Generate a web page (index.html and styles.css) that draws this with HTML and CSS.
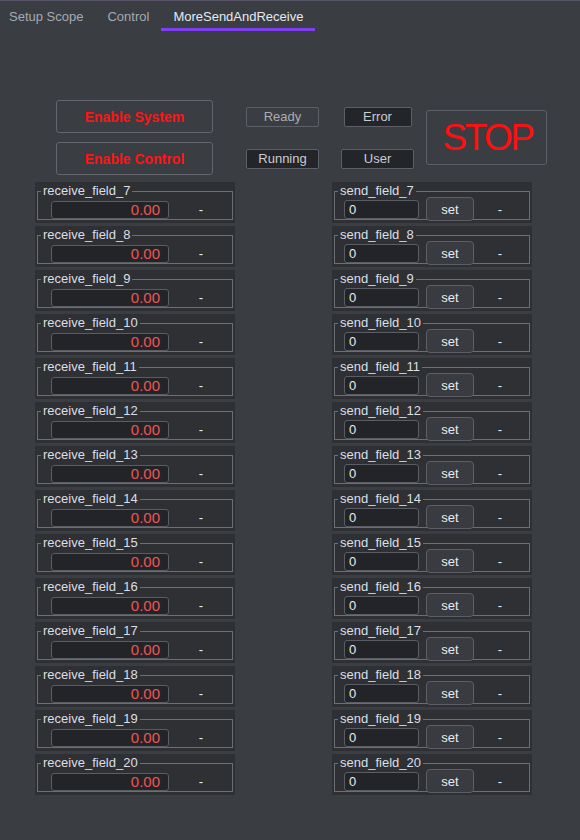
FILE: index.html
```html
<!DOCTYPE html>
<html>
<head>
  <meta charset="utf-8">
  <title>MoreSendAndReceive</title>
  <link rel="stylesheet" href="styles.css">
</head>
<body>

  <nav class="tabbar">
    <span class="tab">Setup Scope</span>
    <span class="tab">Control</span>
    <span class="tab active">MoreSendAndReceive</span>
  </nav>

  <section class="controls">
    <div class="enable-col">
      <button class="enable-btn">Enable System</button>
      <button class="enable-btn">Enable Control</button>
    </div>
    <div class="status-col">
      <span class="status">Ready</span>
      <span class="status on">Running</span>
    </div>
    <div class="status-col right">
      <span class="status on narrow">Error</span>
      <span class="status on">User</span>
    </div>
    <button class="stop-btn">STOP</button>
  </section>

  <section class="fields">
    <div class="column" id="receive-col"></div>
    <div class="column" id="send-col"></div>
  </section>

  <script>
    const receiveCol = document.getElementById('receive-col');
    const sendCol = document.getElementById('send-col');

    for (let i = 7; i <= 20; i++) {
      receiveCol.insertAdjacentHTML('beforeend',
        '<div class="panel">' +
          '<div class="group">' +
            '<span class="group-title">receive_field_' + i + '</span>' +
            '<span class="value-box">0.00</span>' +
            '<span class="dash">-</span>' +
          '</div>' +
        '</div>');

      sendCol.insertAdjacentHTML('beforeend',
        '<div class="panel">' +
          '<div class="group">' +
            '<span class="group-title">send_field_' + i + '</span>' +
            '<input class="send-input" type="text" value="0">' +
            '<button class="set-btn">set</button>' +
            '<span class="dash">-</span>' +
          '</div>' +
        '</div>');
    }
  </script>

</body>
</html>
```

FILE: styles.css
```css
body{
    margin: 0;
    background: #3a3d42;
    color: #dcdfe4;
    font-family: "Liberation Sans", Arial, sans-serif;
    font-size: 13px;
}

/* tabs */
.tabbar{
    display: flex;
    border-top: 1px solid #57546a;
    height: 30px;
}

.tab{
    padding: 5px 12px 0 12px;
    line-height: 22px;
    color: #a3abb5;
    box-sizing: border-box;
    height: 30px;
}

.tab:first-child{
    margin-left: -3px;
}

.tab.active{
    color: #e4eaf2;
    border-bottom: 3px solid #7f3ff0;
}

/* top controls */
.controls{
    display: flex;
    align-items: flex-start;
    padding: 69px 0 0 56px;
    height: 82px;
}

.enable-col{
    display: flex;
    flex-direction: column;
    gap: 9px;
    width: 157px;
}

.enable-btn{
    font: inherit;
    font-size: 14px;
    font-weight: bold;
    color: #ff1414;
    background: #3a3d42;
    border: 1px solid #62656b;
    border-radius: 3px;
    height: 33px;
    padding: 0;
}

.status-col{
    display: flex;
    flex-direction: column;
    align-items: center;
    gap: 22px;
    width: 73px;
    margin: 7px 0 0 33px;
}

.status-col.right{
    margin-left: 22px;
}

.status{
    box-sizing: border-box;
    width: 73px;
    height: 20px;
    line-height: 18px;
    text-align: center;
    color: #a9adb3;
    border: 1px solid #5c5f65;
    border-radius: 2px;
}

.status.on{
    background: #242529;
    color: #c9ccd1;
}

.status.narrow{
    width: 68px;
}

.stop-btn{
    margin: 10px 0 0 12px;
    width: 121px;
    height: 55px;
    background: #3a3d42;
    border: 1px solid #5c5f65;
    border-radius: 3px;
    color: #ff1010;
    font-family: "Liberation Sans", Arial, sans-serif;
    font-size: 37px;
    letter-spacing: -2.5px;
    padding: 0 0 0 2px;
}

/* field panels */
.fields{
    display: flex;
    gap: 97px;
    padding: 0 0 0 35px;
}

.column{
    width: 200px;
}

.panel{
    background: #2e3034;
    height: 41px;
    margin-bottom: 3px;
    padding: 9px 2px 0 2px;
    box-sizing: border-box;
}

.group{
    position: relative;
    display: flex;
    align-items: flex-start;
    height: 29px;
    box-sizing: border-box;
    border: 1px solid #6b6e74;
    padding: 9px 0 0 13px;
}

.group-title{
    position: absolute;
    top: -9px;
    left: 3px;
    padding: 0 2px;
    background: #2e3034;
    color: #dcdfe4;
    line-height: 15px;
}

.value-box{
    box-sizing: border-box;
    width: 118px;
    height: 18px;
    background: #232428;
    border: 1px solid #5a5d63;
    border-radius: 3px;
    color: #f05454;
    font-size: 15px;
    line-height: 16px;
    text-align: right;
    padding-right: 8px;
}

.dash{
    margin: 1px 0 0 29px;
    width: 6px;
    text-align: center;
    color: #e8ebef;
}

.send-input{
    box-sizing: border-box;
    width: 75px;
    height: 19px;
    margin: -1px 0 0 -4px;
    background: #232428;
    border: 1px solid #5a5d63;
    border-radius: 3px;
    color: #e8ebef;
    font: inherit;
    font-size: 13px;
    padding: 0 0 0 4px;
}

.set-btn{
    box-sizing: border-box;
    width: 48px;
    height: 24px;
    margin: -4px 0 0 7px;
    background: #393b40;
    border: 1px solid #5c5f65;
    border-radius: 4px;
    color: #e8ebef;
    font: inherit;
    font-size: 13px;
    padding: 0;
}

.set-btn + .dash{
    margin-left: 23px;
}
```
